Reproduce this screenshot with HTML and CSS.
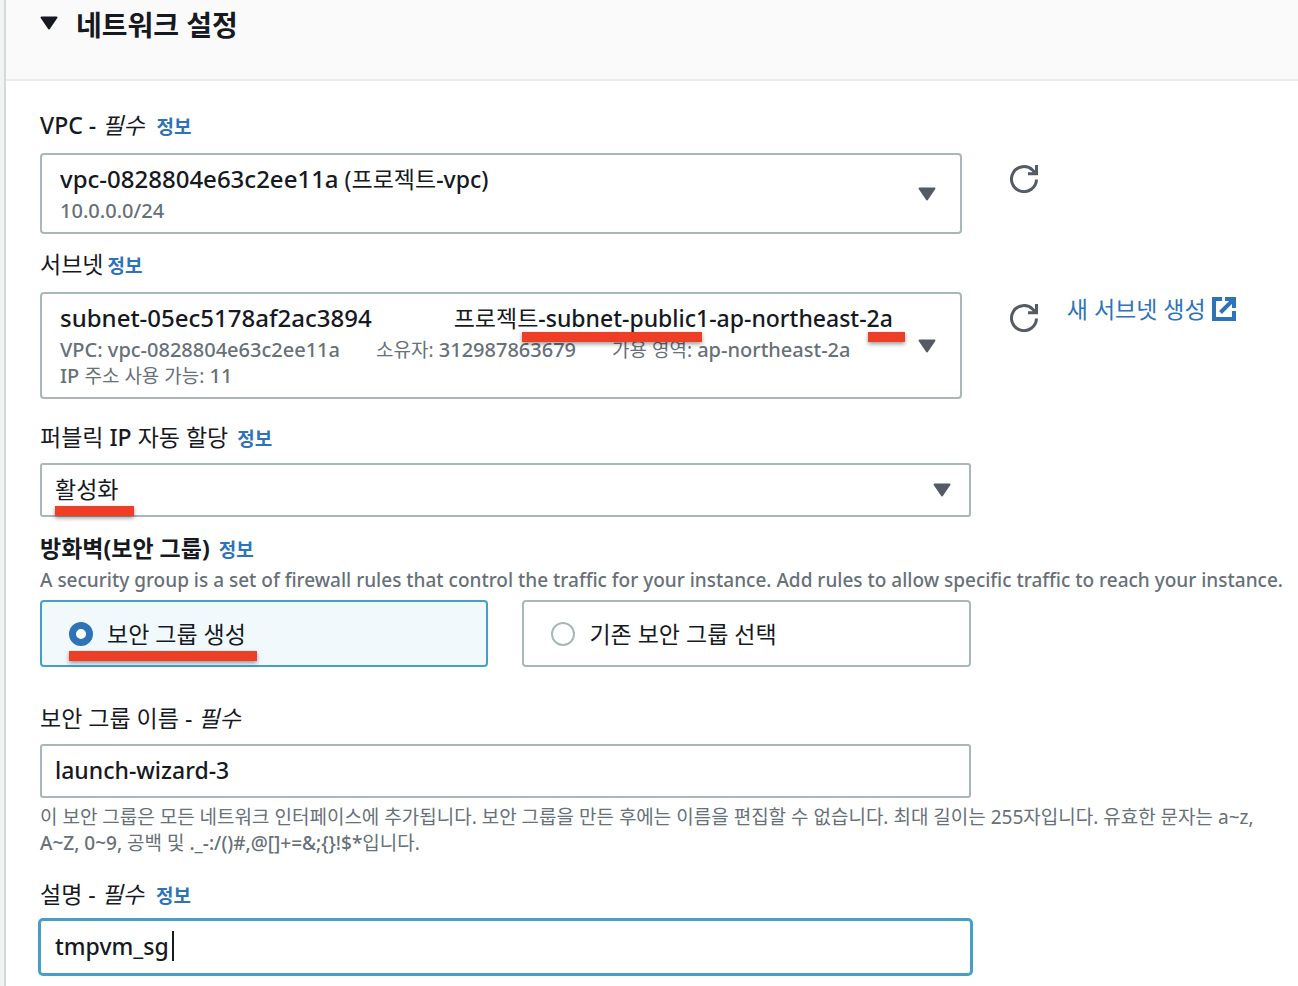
FILE: index.html
```html
<!DOCTYPE html>
<html lang="ko">
<head>
<meta charset="utf-8">
<meta name="viewport" content="width=device-width, initial-scale=1">
<title>네트워크 설정</title>
<link rel="stylesheet" href="styles.css">
</head>
<body>
<main class="panel">
  <header class="panel-header">
    <button class="toggle" type="button" aria-expanded="true" aria-label="네트워크 설정 접기">
      <svg class="arrow" viewBox="0 0 18 14" aria-hidden="true"><path d="M1.500 1.500H16.500L9 12.500Z"/></svg>
    </button>
    <h2 class="title">네트워크 설정</h2>
  </header>

  <form class="content">
    <section class="field">
      <div class="label-row">
        <label for="vpc"><span class="medium">VPC -</span> <em>필수</em></label>
        <a class="info" href="#vpc-info">정보</a>
      </div>
      <div class="resource-row">
        <button class="picker" id="vpc" type="button" aria-haspopup="listbox">
          <span class="picker-text">
            <span class="picker-main"><span class="id">vpc-0828804e63c2ee11a</span> (프로젝트<span class="medium">-vpc)</span></span>
            <span class="picker-meta">10.0.0.0/24</span>
          </span>
          <svg class="arrow" viewBox="0 0 18 14" aria-hidden="true"><path d="M1.500 1.500H16.500L9 12.500Z"/></svg>
        </button>
        <div class="actions">
          <button class="refresh" type="button" aria-label="VPC 새로 고침">
            <svg viewBox="0 0 28 28" aria-hidden="true"><path d="M26.500 14.500A12.500 12.500 0 1 1 22.800 5.200L26 8.600M26.500 0V8.800H18"/></svg>
          </button>
        </div>
      </div>
    </section>

    <section class="field">
      <div class="label-row tight">
        <label for="subnet">서브넷</label>
        <a class="info" href="#subnet-info">정보</a>
      </div>
      <div class="resource-row">
        <button class="picker" id="subnet" type="button" aria-haspopup="listbox">
          <span class="picker-text">
            <span class="picker-main split"><span class="id">subnet-05ec5178af2ac3894</span><span>프로젝트<span class="medium">-subnet-public1-ap-northeast-2a</span></span></span>
            <span class="picker-meta"><span>VPC: vpc-0828804e63c2ee11a</span><span><span class="ko">소유자:</span> 312987863679</span><span><span class="ko">가용 영역:</span> ap-northeast-2a</span></span>
            <span class="picker-meta"><span>IP <span class="ko">주소 사용 가능:</span> 11</span></span>
          </span>
          <svg class="arrow" viewBox="0 0 18 14" aria-hidden="true"><path d="M1.500 1.500H16.500L9 12.500Z"/></svg>
          <span class="mark mark-name"></span>
          <span class="mark mark-zone"></span>
        </button>
        <div class="actions">
          <button class="refresh" type="button" aria-label="서브넷 새로 고침">
            <svg viewBox="0 0 28 28" aria-hidden="true"><path d="M26.500 14.500A12.500 12.500 0 1 1 22.800 5.200L26 8.600M26.500 0V8.800H18"/></svg>
          </button>
          <a class="create" href="#create-subnet">새 서브넷 생성
            <svg viewBox="0 0 24 24" aria-hidden="true"><path d="M10 2H2V22H22V14M13 2H22V11M22 2L8.500 15.500"/></svg>
          </a>
        </div>
      </div>
    </section>

    <section class="field compact">
      <div class="label-row wide">
        <label for="public-ip">퍼블릭 <span class="medium">IP</span> 자동 할당</label>
        <a class="info" href="#ip-info">정보</a>
      </div>
      <div class="control">
        <select class="box" id="public-ip"><option>활성화</option><option>비활성화</option></select>
        <svg class="arrow select-arrow" viewBox="0 0 18 14" aria-hidden="true"><path d="M1.500 1.500H16.500L9 12.500Z"/></svg>
        <span class="mark mark-enabled"></span>
      </div>
    </section>

    <section class="field firewall" role="radiogroup" aria-labelledby="firewall-title">
      <div class="label-row wide">
        <h3 class="group-title" id="firewall-title">방화벽(보안 그룹)</h3>
        <a class="info" href="#firewall-info">정보</a>
      </div>
      <p class="hint medium" lang="en">A security group is a set of firewall rules that control the traffic for your instance. Add rules to allow specific traffic to reach your instance.</p>
      <div class="tiles">
        <label class="tile selected" for="sg-new">
          <input class="radio" id="sg-new" type="radio" name="sg" checked>보안 그룹 생성
          <span class="mark mark-create"></span>
        </label>
        <label class="tile" for="sg-existing">
          <input class="radio" id="sg-existing" type="radio" name="sg">기존 보안 그룹 선택
        </label>
      </div>
    </section>

    <section class="field compact">
      <div class="label-row"><label for="sg-name">보안 그룹 이름 - <em>필수</em></label></div>
      <div class="described">
        <div class="control"><input class="box medium" id="sg-name" type="text" value="launch-wizard-3"></div>
        <p class="hint">이 보안 그룹은 모든 네트워크 인터페이스에 추가됩니다. 보안 그룹을 만든 후에는 이름을 편집할 수 없습니다. 최대 길이는 255자입니다. 유효한 문자는 a~z, <span class="medium">A~Z, 0~9,</span> 공백 및 <span class="medium">._-:/()#,@[]+=&amp;;{}!$*</span>입니다.</p>
      </div>
    </section>

    <section class="field compact">
      <div class="label-row">
        <label for="sg-desc">설명 - <em>필수</em></label>
        <a class="info" href="#desc-info">정보</a>
      </div>
      <div class="control"><input class="box active medium" id="sg-desc" type="text" value="tmpvm_sg"><span class="caret"></span></div>
    </section>
  </form>
</main>
</body>
</html>
```
FILE: styles.css
```css
* { box-sizing: border-box; }

body {
  margin: 0;
  padding-left: 4px;
  background: #f2f3f3;
  color: #16191f;
  font: 23px/28px "Noto Sans", "Noto Sans CJK KR", sans-serif;
}

button, input, select { font: inherit; color: inherit; margin: 0; }
h2, h3, p { margin: 0; }
a { color: #2e73b8; text-decoration: none; }
.medium { font-weight: 500; }

.panel {
  min-height: 100vh;
  border-left: 2px solid #d5d9d9;
  background: #fff;
}

.panel-header {
  display: flex;
  gap: 18px;
  padding: 8px 34px 36px;
  border-bottom: 2px solid #eaeded;
  background: #fafafa;
}

.toggle {
  display: flex;
  align-items: center;
  height: 30px;
  padding: 0;
  border: 0;
  background: none;
}

.title { font-size: 28px; line-height: 35px; font-weight: 700; }

.arrow {
  flex: none;
  width: 18px;
  height: 14px;
  fill: #545b64;
  stroke: #545b64;
  stroke-width: 2;
  stroke-linejoin: round;
}
.toggle .arrow { fill: #16191f; stroke: #16191f; }

.content {
  display: flex;
  flex-direction: column;
  gap: 16px;
  padding: 30px 17px 10px 34px;
}

.field { display: flex; flex-direction: column; gap: 14px; }
.field.compact { gap: 12px; padding-top: 8px; }

.label-row { display: flex; align-items: center; gap: 12px; height: 28px; }
.label-row.tight { gap: 4px; }
.label-row.wide { gap: 9px; }
.info { padding-top: 3px; font-size: 19px; font-weight: 700; }

.resource-row {
  display: grid;
  grid-template-columns: minmax(0, 3fr) minmax(0, 1fr);
  column-gap: 40px;
}

.picker {
  position: relative;
  display: flex;
  align-items: center;
  justify-content: space-between;
  padding: 8px 24px 8px 18px;
  margin-right: -21px;
  border: 2px solid #aab7b8;
  border-radius: 4px;
  background: #fff;
  text-align: left;
}
.picker-text { display: flex; flex-direction: column; white-space: nowrap; }
.picker-main { height: 35px; line-height: 32px; }
.picker-main.split { display: flex; gap: 82px; }
.id { font-size: 24px; font-weight: 500; }
.picker-meta {
  display: flex;
  gap: 36px;
  height: 26px;
  color: #687078;
  font-size: 20px;
  font-weight: 500;
  line-height: 26px;
}
.ko { font-size: 19px; font-weight: 400; }

.actions { display: flex; align-items: flex-start; gap: 29px; margin-left: 29px; }
.refresh { display: flex; padding: 12px 0 0; border: 0; background: none; }
.refresh svg { width: 28px; height: 28px; fill: none; stroke: #545b64; stroke-width: 3; }
.create { display: flex; align-items: center; gap: 6px; padding-top: 3px; white-space: nowrap; }
.create svg { width: 24px; height: 24px; fill: none; stroke: #2e73b8; stroke-width: 4; }

.control { position: relative; width: 75%; }
.box {
  display: block;
  width: 100%;
  height: 54px;
  padding: 0 13px 2px;
  border: 2px solid #aab7b8;
  border-radius: 3px;
  background: #fff;
  appearance: none;
  outline: none;
}
.select-arrow { position: absolute; right: 20px; top: 20px; pointer-events: none; }
.box.active { padding: 0 14px 2px; border: 1px solid #489fc6; box-shadow: 0 0 0 2px #489fc6; }
.caret { position: absolute; left: 132px; top: 11px; width: 2px; height: 30px; background: #16191f; }

.firewall { gap: 5px; padding-top: 1px; }
.group-title { font-size: 23px; line-height: 28px; font-weight: 700; }
.hint { margin-right: -12px; color: #687078; font-size: 19px; line-height: 26px; }
.described { display: flex; flex-direction: column; gap: 6px; }

.tiles {
  display: grid;
  grid-template-columns: 1fr 1fr;
  gap: 34px;
  width: 75%;
  padding: 2px 0 13px;
}
.tile {
  position: relative;
  display: flex;
  align-items: center;
  gap: 14px;
  height: 67px;
  padding: 0 27px;
  border: 2px solid #aab7b8;
  border-radius: 4px;
}
.tile.selected { border-color: #489fc6; background: #f2f9fd; }
.radio {
  width: 24px;
  height: 24px;
  border: 2px solid #aab7b8;
  border-radius: 50%;
  background: #fff;
  appearance: none;
}
.radio:checked { border: 7px solid #2e73b8; }

/* Red emphasis strokes laid over the form */
.mark {
  position: absolute;
  height: 10px;
  background: #ec3f25;
  box-shadow: 0 2px 4px rgba(0, 0, 0, 0.4);
}
.mark-name { left: 480px; top: 38px; width: 180px; }
.mark-zone { left: 826px; top: 38px; width: 37px; }
.mark-enabled { left: 15px; top: 43px; width: 79px; }
.mark-create { left: 27px; top: 49px; width: 188px; }
```
